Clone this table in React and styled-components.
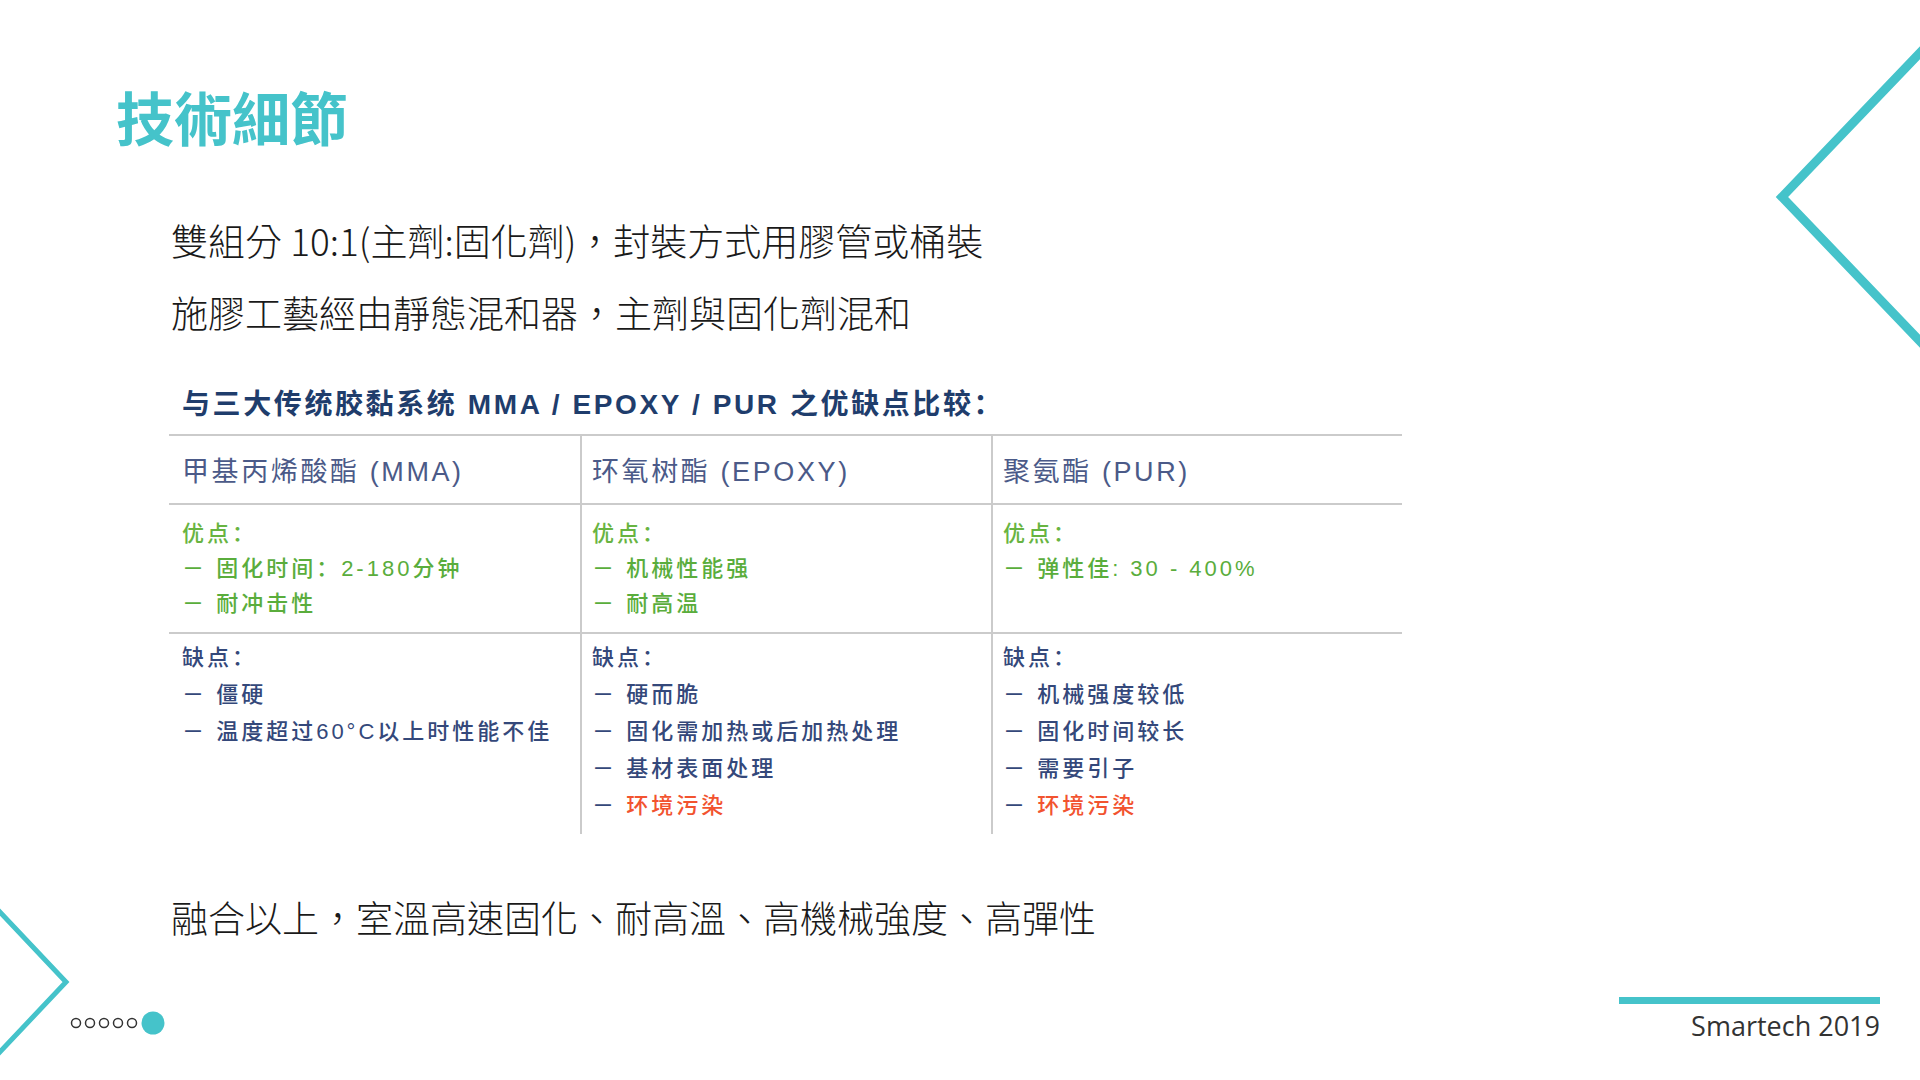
import React from "react"
import styled, { createGlobalStyle } from "styled-components"

const teal = "#45c3ca"

const GlobalStyle = createGlobalStyle`
  html, body {
    margin: 0;
    padding: 0;
    background: #ffffff;
  }
`

const Slide = styled.div`
  position: relative;
  width: 1920px;
  height: 1080px;
  overflow: hidden;
  background: #ffffff;
  display: flex;
  flex-direction: column;
  padding: 81px 0 38px;
  box-sizing: border-box;
  font-family: "Noto Sans CJK TC", "Noto Sans", sans-serif;
`

const Title = styled.h1`
  margin: 0 0 0 116px;
  font-size: 58px;
  line-height: 70px;
  font-weight: 700;
  color: ${teal};
  letter-spacing: 0;
`

const Body = styled.div`
  margin: ${p => p.$top}px 0 0 171px;
  display: flex;
  flex-direction: column;
`

const Line = styled.p`
  margin: 0;
  font-size: 37px;
  line-height: 72px;
  font-weight: 300;
  color: #1a1a1a;
  white-space: nowrap;
`

const TableTitle = styled.h2`
  margin: 39px 0 0 182px;
  font-family: "Liberation Sans", "Noto Sans CJK SC", sans-serif;
  font-size: 28px;
  line-height: 36px;
  font-weight: 700;
  letter-spacing: 2.6px;
  color: #1f3d6c;
`

const Compare = styled.div`
  margin: 11px 0 0 169px;
  display: grid;
  grid-template-columns: repeat(3, 411px);
  font-family: "Liberation Sans", "Noto Sans CJK SC", sans-serif;
`

const Cell = styled.div`
  box-sizing: border-box;
  height: ${p => p.$h}px;
  border-top: 2px solid #cbcbcb;
  border-left: ${p => (p.$first ? "none" : "2px solid #cbcbcb")};
  padding: ${p => p.$pad}px 12px 0 ${p => (p.$first ? 13 : 10)}px;
`

const HeadCell = styled(Cell)`
  display: flex;
  align-items: center;
  font-size: 27px;
  letter-spacing: 2.6px;
  color: #4b5a88;
  white-space: nowrap;
`

const Label = styled.div`
  font-size: 22px;
  line-height: ${p => p.$lh}px;
  font-weight: 500;
  letter-spacing: 3px;
  color: ${p => p.$color};
  white-space: nowrap;
`

const Tone = styled.span`
  color: ${p => p.$color};
`

const Footer = styled.div`
  margin-top: auto;
  display: flex;
  justify-content: space-between;
  align-items: flex-start;
  padding-right: 40px;
`

const Dots = styled.svg`
  margin-top: 14px;
  display: block;
`

const Brand = styled.div`
  width: 261px;
  display: flex;
  flex-direction: column;
  align-items: flex-end;
`

const Bar = styled.div`
  width: 100%;
  height: 7px;
  background: ${teal};
`

const BrandText = styled.div`
  margin-top: 6px;
  font-family: "Open Sans", "Noto Sans", sans-serif;
  font-size: 27px;
  line-height: 32px;
  color: #333333;
`

const Deco = styled.svg`
  position: absolute;
  left: ${p => p.$x}px;
  top: ${p => p.$y}px;
`

const green = "#5aad3c"
const navy = "#34487a"
const red = "#f2532f"

const columns = [
  {
    head: "甲基丙烯酸酯 (MMA)",
    pros: ["固化时间：2-180分钟", "耐冲击性"],
    cons: [["僵硬"], ["温度超过60°C以上时性能不佳"]],
  },
  {
    head: "环氧树酯 (EPOXY)",
    pros: ["机械性能强", "耐高温"],
    cons: [["硬而脆"], ["固化需加热或后加热处理"], ["基材表面处理"], ["环境污染", red]],
  },
  {
    head: "聚氨酯 (PUR)",
    pros: ["弹性佳: 30 - 400%"],
    cons: [["机械强度较低"], ["固化时间较长"], ["需要引子"], ["环境污染", red]],
  },
]

const App = () => {
  return (
    <Slide>
      <GlobalStyle />

      <Deco $x={1760} $y={30} width="160" height="340" viewBox="0 0 160 340">
        <polyline points="176,6 22,167 176,328" fill="none" stroke={teal} strokeWidth="9" />
      </Deco>
      <Deco $x={0} $y={890} width="90" height="190" viewBox="0 0 90 190">
        <polyline points="-20,1 66,92 -20,183" fill="none" stroke={teal} strokeWidth="5" />
      </Deco>

      <Title>技術細節</Title>

      <Body $top={53}>
        <Line>雙組分 10:1(主劑:固化劑)，封裝方式用膠管或桶裝</Line>
        <Line>施膠工藝經由靜態混和器，主劑與固化劑混和</Line>
      </Body>

      <TableTitle>与三大传统胶黏系统 MMA / EPOXY / PUR 之优缺点比较：</TableTitle>

      <Compare>
        {columns.map((c, i) => (
          <HeadCell key={"h" + i} $h={69} $pad={0} $first={i === 0}>{c.head}</HeadCell>
        ))}
        {columns.map((c, i) => (
          <Cell key={"p" + i} $h={129} $pad={11} $first={i === 0}>
            <Label $lh={35} $color="#68b441">优点：</Label>
            {c.pros.map(t => (
              <Label key={t} $lh={35} $color={green}>－ {t}</Label>
            ))}
          </Cell>
        ))}
        {columns.map((c, i) => (
          <Cell key={"c" + i} $h={202} $pad={5} $first={i === 0}>
            <Label $lh={37} $color={navy}>缺点：</Label>
            {c.cons.map(([t, col]) => (
              <Label key={t} $lh={37} $color={navy}>
                －{" "}<Tone $color={col || navy}>{t}</Tone>
              </Label>
            ))}
          </Cell>
        ))}
      </Compare>

      <Body $top={47}>
        <Line>融合以上，室溫高速固化、耐高溫、高機械強度、高彈性</Line>
      </Body>

      <Footer>
        <Dots width="170" height="24" viewBox="0 0 170 24">
          {[76, 90, 104, 118, 132].map(x => (
            <circle key={x} cx={x} cy="12" r="4.5" fill="none" stroke="#333" strokeWidth="1.5" />
          ))}
          <circle cx="153" cy="12" r="11.5" fill={teal} />
        </Dots>
        <Brand>
          <Bar />
          <BrandText>Smartech 2019</BrandText>
        </Brand>
      </Footer>
    </Slide>
  )
}

export default App
